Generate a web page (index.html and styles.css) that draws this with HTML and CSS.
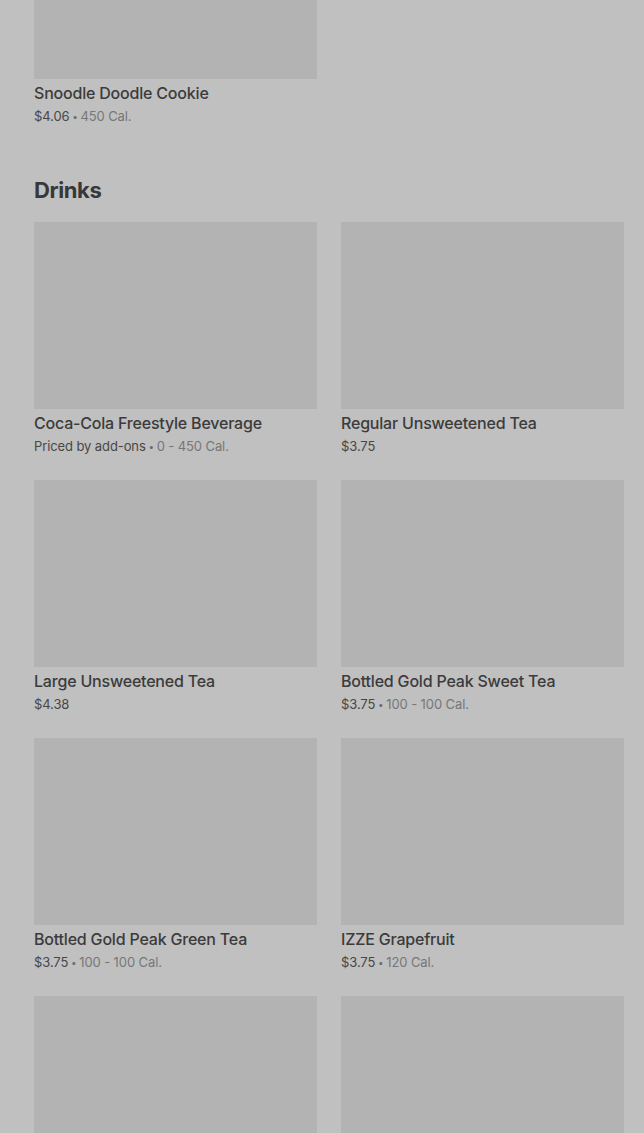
FILE: index.html
```html
<!DOCTYPE html>
<html>
<head>
<meta charset="utf-8">
<link rel="stylesheet" href="styles.css">
</head>
<body>
<main class="page">
  <section class="section first">
    <div class="grid">
      <div class="card">
        <div class="thumb"></div>
        <div class="name">Snoodle Doodle Cookie</div>
        <div class="meta"><span class="price">$4.06</span><span class="dot"> • </span><span class="cal">450 Cal.</span></div>
      </div>
    </div>
  </section>
  <section class="section">
    <h2 class="heading">Drinks</h2>
    <div class="grid">
      <div class="card">
        <div class="thumb"></div>
        <div class="name">Coca-Cola Freestyle Beverage</div>
        <div class="meta"><span class="price">Priced by add-ons</span><span class="dot"> • </span><span class="cal">0 - 450 Cal.</span></div>
      </div>
      <div class="card">
        <div class="thumb"></div>
        <div class="name">Regular Unsweetened Tea</div>
        <div class="meta"><span class="price">$3.75</span></div>
      </div>
      <div class="card">
        <div class="thumb"></div>
        <div class="name">Large Unsweetened Tea</div>
        <div class="meta"><span class="price">$4.38</span></div>
      </div>
      <div class="card">
        <div class="thumb"></div>
        <div class="name">Bottled Gold Peak Sweet Tea</div>
        <div class="meta"><span class="price">$3.75</span><span class="dot"> • </span><span class="cal">100 - 100 Cal.</span></div>
      </div>
      <div class="card">
        <div class="thumb"></div>
        <div class="name">Bottled Gold Peak Green Tea</div>
        <div class="meta"><span class="price">$3.75</span><span class="dot"> • </span><span class="cal">100 - 100 Cal.</span></div>
      </div>
      <div class="card">
        <div class="thumb"></div>
        <div class="name">IZZE Grapefruit</div>
        <div class="meta"><span class="price">$3.75</span><span class="dot"> • </span><span class="cal">120 Cal.</span></div>
      </div>
      <div class="card">
        <div class="thumb"></div>
      </div>
      <div class="card">
        <div class="thumb"></div>
      </div>
    </div>
  </section>
</main>
</body>
</html>
```

FILE: styles.css
```css
html, body {
  margin: 0;
  padding: 0;
  background: #c0c0c0;
  overflow: hidden;
}
body {
  font-family: Inter, "Noto Sans", "Liberation Sans", sans-serif;
  color: #3b3b3b;
}
.page {
  padding: 0 20px 0 34px;
  display: flex;
  flex-direction: column;
  gap: 48px;
}
.section.first {
  margin-top: -108px;
}
.heading {
  margin: 0 0 16px;
  font-size: 22px;
  line-height: 32px;
  font-weight: 700;
  letter-spacing: -0.4px;
  color: #383838;
}
.grid {
  display: grid;
  grid-template-columns: 283px 283px;
  column-gap: 24px;
  row-gap: 24px;
}
.thumb {
  height: 187px;
  background: #b3b3b3;
}
.name {
  margin-top: 4px;
  font-size: 16px;
  line-height: 20px;
  font-weight: 500;
  letter-spacing: -0.2px;
  color: #3b3b3b;
  white-space: nowrap;
}
.meta {
  margin-top: 3px;
  height: 20px;
  font-size: 13px;
  line-height: 20px;
  letter-spacing: -0.1px;
  color: #474747;
  white-space: nowrap;
}
.dot {
  color: #6e6e6e;
  font-size: 10px;
  line-height: 0;
  vertical-align: 1px;
}
.cal {
  color: #777777;
}
```
